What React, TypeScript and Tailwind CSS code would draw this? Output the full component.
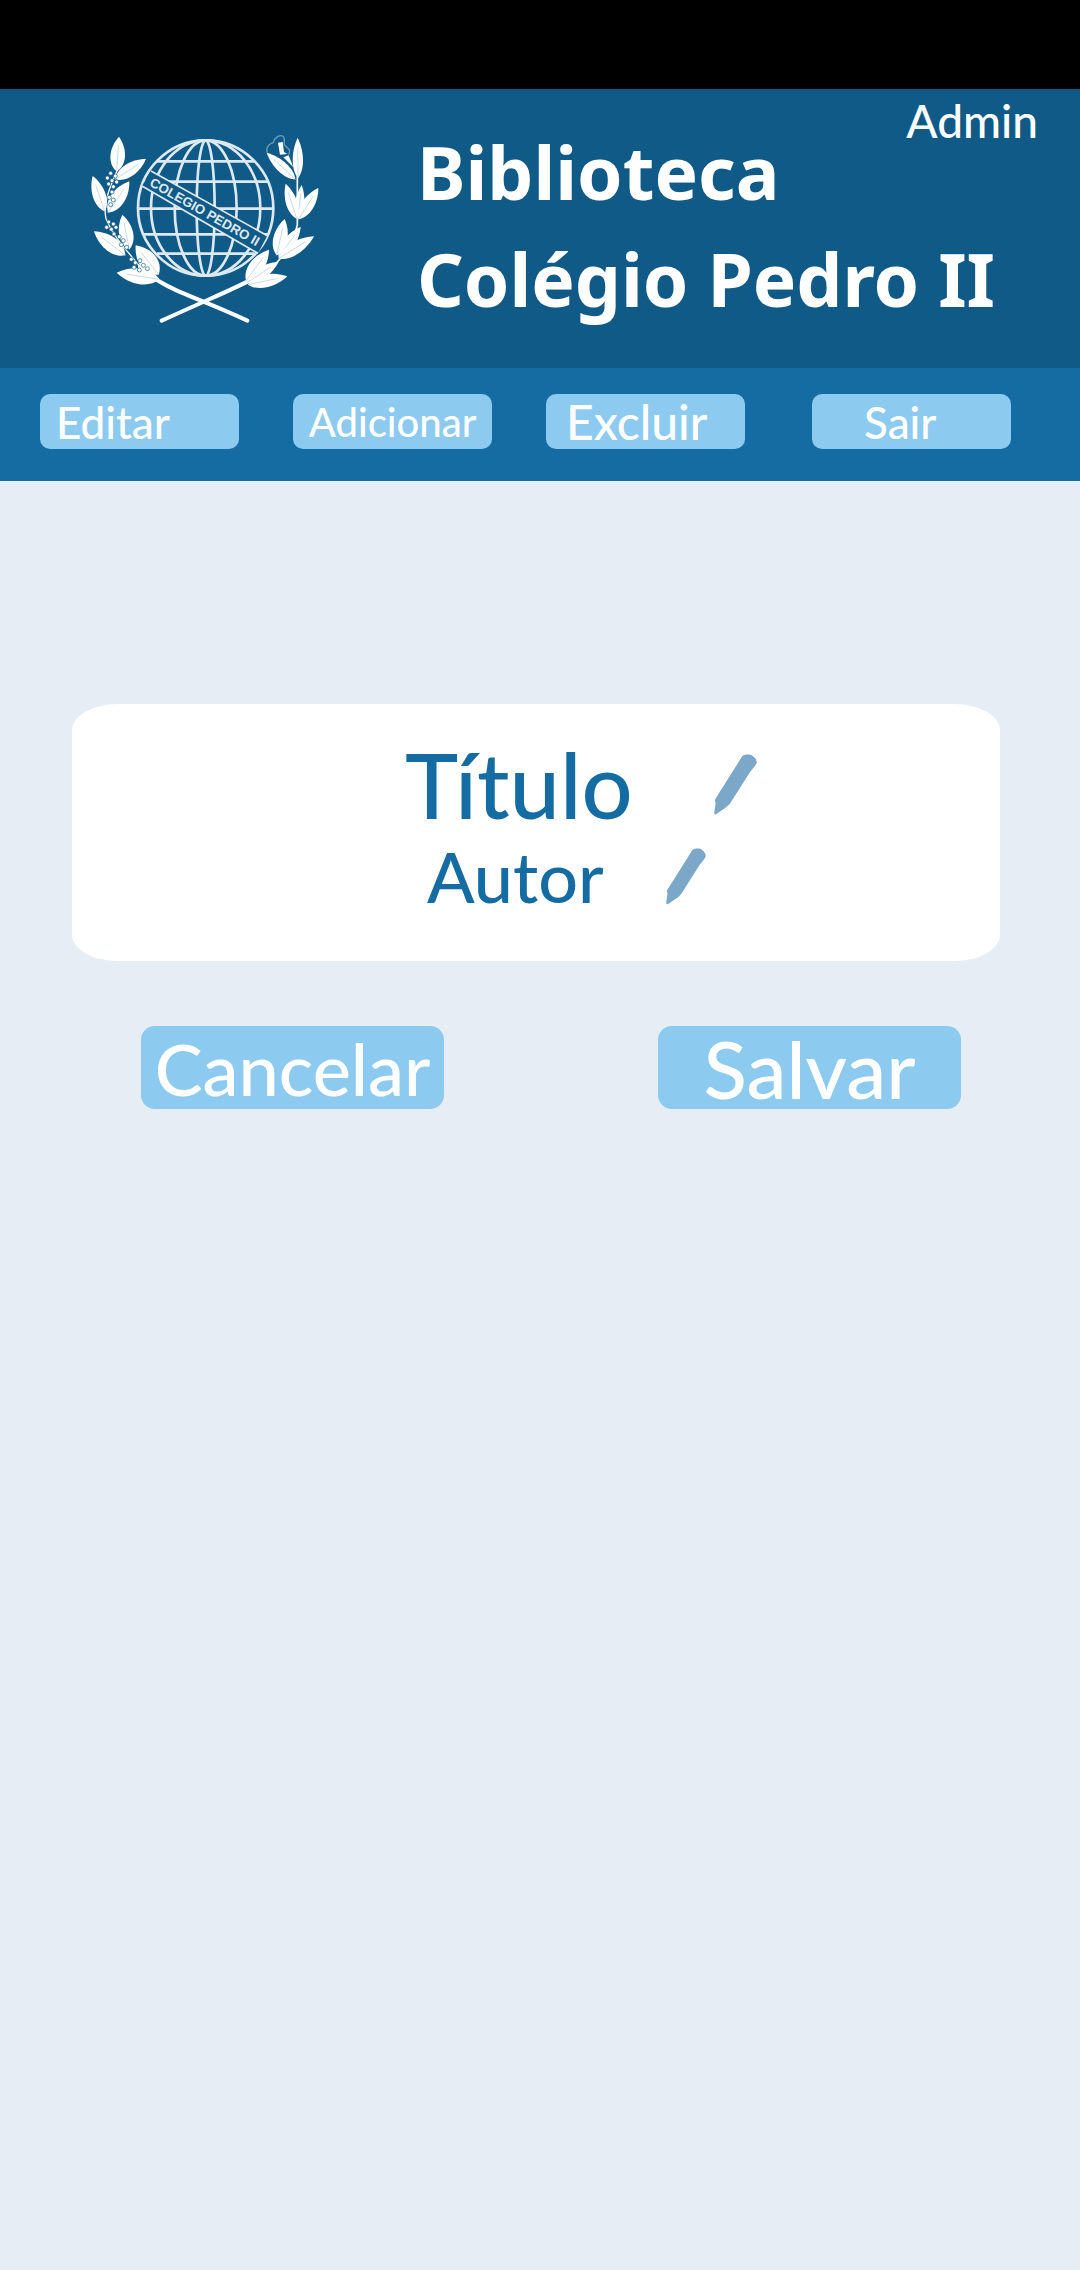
import type { ReactNode } from "react";

type Leaf = [number, number, number, number, number];

// Each leaf: base x, base y, tip x, tip y, width
const LEAVES: Leaf[] = [
  [170, 184, 177, 80, 54],
  [166, 208, 258, 147, 48],
  [134, 304, 98, 198, 48],
  [144, 308, 208, 214, 54],
  [208, 418, 187, 314, 52],
  [196, 436, 102, 364, 54],
  [296, 494, 227, 406, 66],
  [298, 508, 170, 488, 58],
  [714, 204, 713, 83, 38],
  [706, 208, 620, 128, 40],
  [710, 326, 677, 221, 42],
  [714, 326, 725, 225, 34],
  [716, 328, 775, 234, 46],
  [650, 436, 674, 327, 52],
  [656, 442, 722, 350, 44],
  [656, 446, 762, 379, 46],
  [558, 512, 627, 419, 54],
  [562, 518, 656, 455, 42],
  [564, 524, 682, 499, 48],
];

const BERRIES: [number, number][] = [
  [152, 190], [166, 198], [142, 204], [156, 212], [170, 216], [146, 222], [160, 230],
  [156, 246], [148, 262], [160, 270], [152, 284], [146, 336], [160, 342], [140, 352],
  [154, 358], [168, 352], [162, 372], [178, 380], [190, 392], [184, 404], [200, 412],
  [214, 448], [226, 458], [222, 472], [240, 452], [250, 466], [238, 480], [262, 476],
];

function leafPath([bx, by, tx, ty, w]: Leaf) {
  const dx = tx - bx;
  const dy = ty - by;
  const len = Math.hypot(dx, dy);
  const nx = (-dy / len) * w * 0.54;
  const ny = (dx / len) * w * 0.54;
  const at = (t: number, s: number) => `${bx + dx * t + nx * s} ${by + dy * t + ny * s}`;
  return `M${bx} ${by}C${at(0.2, 1)} ${at(0.65, 1)} ${tx} ${ty}C${at(0.65, -1)} ${at(0.2, -1)} ${bx} ${by}Z`;
}

function Crest() {
  return (
    <svg viewBox="0 0 870 690" className="h-[230px] w-[290px] shrink-0" role="img" aria-label="Brasão do Colégio Pedro II">
      <g fill="none" stroke="#dce9f1" strokeWidth="8">
        <circle cx="437" cy="294" r="203" />
        <ellipse cx="437" cy="294" rx="164" ry="203" />
        <ellipse cx="437" cy="294" rx="93" ry="203" />
        <ellipse cx="437" cy="294" rx="27" ry="203" />
        <path d="M291 154H583M250 215H624M234 296H640M250 373H624M291 431H583" />
      </g>
      <path d="M273 183L622 377L594 430L246 228Z" fill="#105a87" />
      <path d="M273 183L622 377M246 228L594 430" stroke="#dce9f1" strokeWidth="5" />
      <text
        x="266"
        y="226"
        transform="rotate(29.5 266 226)"
        fill="#dce9f1"
        fontSize="40"
        className="font-['Liberation_Sans',sans-serif] font-bold"
      >
        COLEGIO PEDRO II
      </text>
      <g fill="none" stroke="#fff" strokeLinecap="round">
        <path d="M172 180C150 230 128 280 138 326C160 380 200 420 240 470" strokeWidth="4" />
        <path d="M712 200V345C700 400 660 460 610 490" strokeWidth="5" />
        <path d="M240 470C320 545 400 555 562 632M610 490C560 520 520 535 305 632" strokeWidth="12" />
      </g>
      {LEAVES.map((leaf) => (
        <g key={leaf.join()}>
          <path d={leafPath(leaf)} fill="#fff" />
          <path
            d={`M${leaf[0]} ${leaf[1]}L${leaf[0] + (leaf[2] - leaf[0]) * 0.75} ${leaf[1] + (leaf[3] - leaf[1]) * 0.75}`}
            stroke="#c9dbe6"
            strokeWidth="3"
          />
        </g>
      ))}
      {BERRIES.map(([x, y]) => (
        <circle key={`${x}-${y}`} cx={x} cy={y} r="6" fill="#fff" stroke="#105a87" strokeWidth="2" />
      ))}
      <path
        d="M622 128C616 110 630 100 640 98C644 82 660 72 670 80C678 90 668 98 674 106C684 116 694 118 686 134"
        fill="none"
        stroke="#6f9cb8"
        strokeWidth="4"
      />
      <path d="M654 98L668 96L672 126L682 132L660 134ZM670 142L686 136L700 172Z" fill="#fff" />
    </svg>
  );
}

function NavButton({ children, className }: { children: ReactNode; className: string }) {
  return (
    <button
      type="button"
      className={`flex h-[55px] w-[199px] items-center rounded-[10px] bg-[#8ccaf0] leading-none text-white ${className}`}
    >
      {children}
    </button>
  );
}

function ActionButton({ children, className }: { children: ReactNode; className: string }) {
  return (
    <button
      type="button"
      className={`flex h-[83px] w-[303px] items-center justify-center rounded-[14px] bg-[#8ccaf0] leading-none text-white ${className}`}
    >
      {children}
    </button>
  );
}

function EditButton({ label, className }: { label: string; className: string }) {
  return (
    <button type="button" aria-label={label} className={className}>
      <svg viewBox="0 0 130 183" className="h-full w-full" fill="#7ba8c8" aria-hidden="true">
        <path d="M86 5C96 -1 111 0 117 5C127 12 131 20 128 29C124 37 113 48 107 57L52 144C47 153 39 158 33 163L8 180C3 184 0 181 1 175L5 147C2 143 2 138 5 134Z" />
      </svg>
    </button>
  );
}

export default function App() {
  return (
    <div className="flex min-h-screen flex-col bg-[#e6edf4] font-[Lato,sans-serif] font-medium">
      <div className="h-[89px] bg-black" />
      <header className="relative flex items-start bg-[#105a87] pt-[21px] pb-7 pl-[60px] text-white">
        <Crest />
        <h1 className="mt-2 ml-[67px] font-['Noto_Sans',sans-serif] text-[73px] leading-[107px] font-bold whitespace-nowrap">
          Biblioteca
          <br />
          Colégio Pedro II
        </h1>
        <span className="absolute top-1 right-[42px] text-[46px] leading-[56px]">Admin</span>
      </header>
      <nav className="flex gap-[54px] bg-[#156ca3] pt-[26px] pr-[69px] pb-8 pl-10">
        <NavButton className="pl-4 text-[44px]">Editar</NavButton>
        <NavButton className="justify-center text-[40px]">Adicionar</NavButton>
        <NavButton className="pl-5 text-[48px]">Excluir</NavButton>
        <NavButton className="ml-auto pl-[52px] text-[44px]">Sair</NavButton>
      </nav>
      <main className="pt-[223px]">
        <section className="mr-20 ml-[72px] flex h-[257px] flex-col rounded-[46px/26px] bg-white pt-7 text-[#156ca3]">
          <div className="flex items-center pl-[333px]">
            <h2 className="w-[309px] text-[90px] leading-[104px]">Título</h2>
            <EditButton label="Editar título" className="h-[61px] w-[43px]" />
          </div>
          <div className="flex items-center pl-[355px]">
            <p className="w-[239px] text-[70px] leading-[80px]">Autor</p>
            <EditButton label="Editar autor" className="h-[57px] w-[40px]" />
          </div>
        </section>
        <div className="mt-[65px] flex justify-between pr-[119px] pl-[141px]">
          <ActionButton className="text-[72px]">Cancelar</ActionButton>
          <ActionButton className="text-[80px]">Salvar</ActionButton>
        </div>
      </main>
    </div>
  );
}
